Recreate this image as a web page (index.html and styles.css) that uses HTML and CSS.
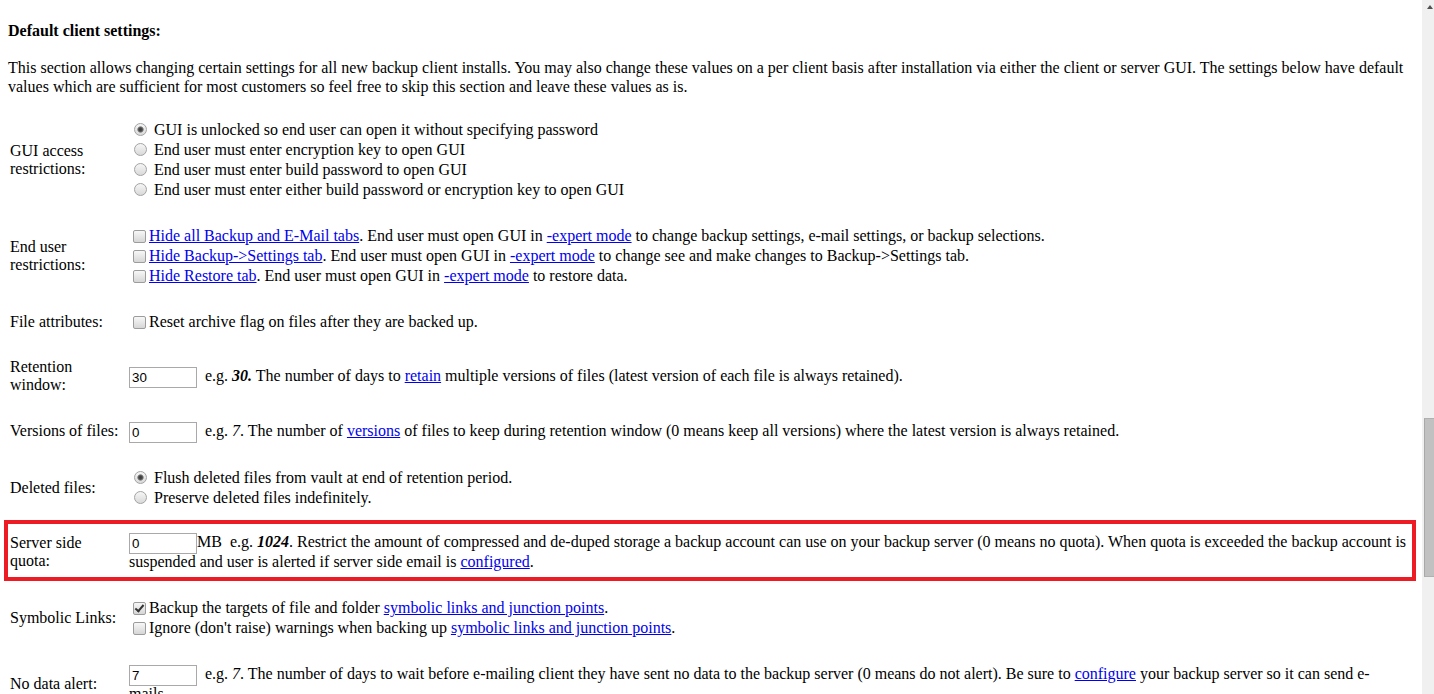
FILE: index.html
```html
<!DOCTYPE html>
<html>
<head>
    <title>Default client settings</title>
    <meta name="viewport" content="width=device-width, initial-scale=1.0">
    <link rel="stylesheet" href="styles.css">
</head>
<body>
    <div class="content">
        <p class="title">Default client settings:</p>

        <p class="intro">This section allows changing certain settings for all new backup client installs. You may also change these values on a per client basis after installation via either the client or server GUI. The settings below have default values which are sufficient for most customers so feel free to skip this section and leave these values as is.</p>

        <div class="row">
            <div class="label">GUI access restrictions:</div>
            <div class="value">
                <div class="opt"><input type="radio" name="gui" checked> GUI is unlocked so end user can open it without specifying password</div>
                <div class="opt"><input type="radio" name="gui"> End user must enter encryption key to open GUI</div>
                <div class="opt"><input type="radio" name="gui"> End user must enter build password to open GUI</div>
                <div class="opt"><input type="radio" name="gui"> End user must enter either build password or encryption key to open GUI</div>
            </div>
        </div>

        <div class="row">
            <div class="label">End user restrictions:</div>
            <div class="value">
                <div class="opt"><input type="checkbox"><a href="#">Hide all Backup and E-Mail tabs</a>. End user must open GUI in <a href="#">-expert mode</a> to change backup settings, e-mail settings, or backup selections.</div>
                <div class="opt"><input type="checkbox"><a href="#">Hide Backup-&gt;Settings tab</a>. End user must open GUI in <a href="#">-expert mode</a> to change see and make changes to Backup-&gt;Settings tab.</div>
                <div class="opt"><input type="checkbox"><a href="#">Hide Restore tab</a>. End user must open GUI in <a href="#">-expert mode</a> to restore data.</div>
            </div>
        </div>

        <div class="row">
            <div class="label">File attributes:</div>
            <div class="value">
                <div class="opt"><input type="checkbox">Reset archive flag on files after they are backed up.</div>
            </div>
        </div>

        <div class="row">
            <div class="label">Retention window:</div>
            <div class="value">
                <input type="text" class="num" value="30">&nbsp; e.g. <b><i>30.</i></b> The number of days to <a href="#">retain</a> multiple versions of files (latest version of each file is always retained).
            </div>
        </div>

        <div class="row">
            <div class="label">Versions of files:</div>
            <div class="value single">
                <input type="text" class="num" value="0">&nbsp; e.g. <i>7</i>. The number of <a href="#">versions</a> of files to keep during retention window (0 means keep all versions) where the latest version is always retained.
            </div>
        </div>

        <div class="row">
            <div class="label">Deleted files:</div>
            <div class="value">
                <div class="opt"><input type="radio" name="deleted" checked> Flush deleted files from vault at end of retention period.</div>
                <div class="opt"><input type="radio" name="deleted"> Preserve deleted files indefinitely.</div>
            </div>
        </div>

        <div class="row marked">
            <div class="label">Server side quota:</div>
            <div class="value">
                <input type="text" class="num" value="0">MB &nbsp;e.g. <b><i>1024</i></b>. Restrict the amount of compressed and de-duped storage a backup account can use on your backup server (0 means no quota). When quota is exceeded the backup account is suspended and user is alerted if server side email is <a href="#">configured</a>.
            </div>
        </div>

        <div class="row">
            <div class="label">Symbolic Links:</div>
            <div class="value">
                <div class="opt"><input type="checkbox" checked>Backup the targets of file and folder <a href="#">symbolic links and junction points</a>.</div>
                <div class="opt"><input type="checkbox">Ignore (don't raise) warnings when backing up <a href="#">symbolic links and junction points</a>.</div>
            </div>
        </div>

        <div class="row">
            <div class="label">No data alert:</div>
            <div class="value">
                <input type="text" class="num" value="7">&nbsp; e.g. <i>7</i>. The number of days to wait before e-mailing client they have sent no data to the backup server (0 means do not alert). Be sure to <a href="#">configure</a> your backup server so it can send e-mails.
            </div>
        </div>
    </div>

    <div class="scrollbar">
        <div class="arrow"></div>
        <div class="thumb"></div>
    </div>
</body>
</html>
```

FILE: styles.css
```css
body {
    font-family: "Liberation Serif", "Times New Roman", serif;
    font-size: 16px;
    color: #000;
    background-color: #ffffff;
    margin: 0;
    display: flex;
    height: 694px;
    overflow: hidden;
}

.content {
    flex: 1;
    min-width: 0;
    padding: 22px 16px 0 8px;
}

.title {
    font-weight: bold;
    margin: 0 0 18px 0;
    line-height: 18px;
}

.intro {
    margin: 0 0 24px 0;
    line-height: 19px;
}

a {
    color: #0000ee;
    text-decoration: underline;
}

.row {
    display: flex;
    align-items: center;
    margin-bottom: 26px;
}

.label {
    flex: none;
    width: 112px;
    padding: 0 7px 0 2px;
    line-height: 18px;
}

.value {
    flex: 1;
    line-height: 20px;
}

.single {
    padding: 1px 0;
}

.opt {
    height: 20px;
    white-space: nowrap;
}

.marked {
    border: 4px solid #ed1c24;
    margin: -14px -10px 17px -4px;
    padding: 8px 2px 5px 0;
}

.num {
    box-sizing: border-box;
    width: 68px;
    height: 21px;
    margin: -3px 0;
    padding: 1px 2px;
    border: 1px solid #a9a9a9;
    font-family: "Liberation Sans", Arial, sans-serif;
    font-size: 13.33px;
    color: #000;
    vertical-align: middle;
}

input[type="radio"] {
    appearance: none;
    box-sizing: border-box;
    width: 13px;
    height: 13px;
    margin: 3px 3px 0 5px;
    border: 1px solid #a3a3a3;
    border-radius: 50%;
    background: linear-gradient(#f6f6f6, #d9d9d9);
    vertical-align: -1px;
}

input[type="radio"]:checked {
    background: radial-gradient(circle, #3c3c3c 0, #4a4a4a 1.8px, #8a8a8a 2.8px, rgba(0, 0, 0, 0) 3.6px), linear-gradient(#f6f6f6, #d9d9d9);
}

input[type="checkbox"] {
    appearance: none;
    position: relative;
    box-sizing: border-box;
    width: 13px;
    height: 13px;
    margin: 0 3px 0 4px;
    border: 1px solid #9c9c9c;
    border-radius: 2px;
    background: linear-gradient(#f7f7f7, #d6d6d6);
    vertical-align: -2px;
}

input[type="checkbox"]:checked::after {
    content: "";
    position: absolute;
    left: 3px;
    top: 0px;
    width: 3px;
    height: 7px;
    border: solid #333;
    border-width: 0 2px 2px 0;
    transform: rotate(40deg);
}

.scrollbar {
    flex: none;
    width: 12px;
    background-color: #f0f0f0;
    display: flex;
    flex-direction: column;
}

.arrow {
    width: 0;
    height: 0;
    margin: 5px 0 0 5px;
    border-left: 3.5px solid transparent;
    border-right: 3.5px solid transparent;
    border-bottom: 4px solid #505050;
}

.thumb {
    margin: 409px 0 0 2px;
    height: 157px;
    background-color: #c1c1c1;
    border-left: 1px solid #a8a8a8;
    border-top: 1px solid #b0b0b0;
    border-bottom: 1px solid #b0b0b0;
}
```
